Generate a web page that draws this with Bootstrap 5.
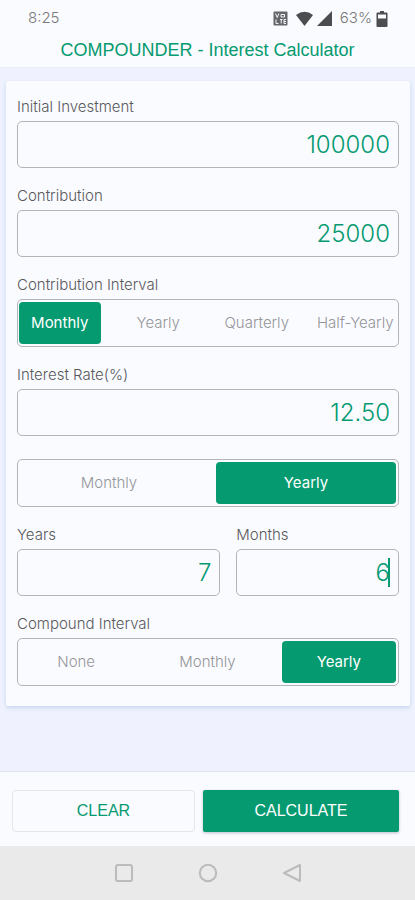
<!DOCTYPE html>
<html lang="en">
<head>
<meta charset="utf-8">
<meta name="viewport" content="width=device-width, initial-scale=1">
<title>COMPOUNDER - Interest Calculator</title>
<link href="https://cdn.jsdelivr.net/npm/bootstrap@5.3.0/dist/css/bootstrap.min.css" rel="stylesheet">
<style>
:root { --brand: #059a70; --paper: #fafbff; --edge: #b3b4b8; --grotesk: "Liberation Sans", Arial, sans-serif; }
body { background: #eff2fe; font-family: Inter, "Liberation Sans", sans-serif; font-weight: 300; }
.status-bar { height: 37px; padding: 0 27px 0 28px; color: #77787b; font-size: 15px; }
.app-head { background: var(--paper); height: 68px; border-bottom: 1px solid #ebeef7; }
.app-title { color: var(--brand); font-family: var(--grotesk); font-size: 18px; line-height: 26px; font-weight: 400; }
.calc-card { background: var(--paper); margin: 13px 5px 0 6px; padding: 14px 11px 20px; box-shadow: 0 2px 4px #c9d5ee; border-radius: 2px; }
.field-label { display: block; font-size: 15px; line-height: 24px; margin-bottom: 2px; color: #58595c; }
.amount, .amount:focus { height: 47px; border: 1px solid var(--edge); border-radius: 5px; background: transparent; color: var(--brand); text-align: right; font-size: 24px; font-weight: 300; padding: 0 8px; box-shadow: none; }
.stack { gap: 16px; }
.interval { height: 48px; gap: 17px; padding: 2px 2px 2px 1px; border: 1px solid var(--edge); border-radius: 5px; }
.interval .btn { flex: 1 1 0; padding: 0; border: 0; border-radius: 4px; font-size: 15px; font-weight: 300; color: #95969a; white-space: nowrap; display: flex; align-items: center; justify-content: center; }
.interval .btn-check:checked + .btn { background: var(--brand); color: #fff; font-weight: 400; }
.rate-period { margin-top: 7px; }
.years-col { flex: 5 1 0; min-width: 0; }
.months-col { flex: 4 1 0; min-width: 0; }
.text-caret { position: absolute; right: 9px; top: 9px; width: 2px; height: 29px; background: var(--brand); }
.action-bar { background: var(--paper); border-top: 1px solid #dfe2ec; padding: 18px 16px 14px 12px; gap: 8px; }
.action-bar .btn { height: 42px; padding: 0; font-family: var(--grotesk); font-size: 16px; }
.btn-clear { flex: 12 1 0; border: 1px solid #e4e6ec; border-radius: 4px; color: var(--brand); }
.btn-calc { flex: 13 1 0; background: var(--brand); color: #fff; border: 0; border-radius: 2px; box-shadow: 0 1px 3px #b9bfcc; }
.system-nav { background: #eaeaea; height: 54px; gap: 64px; }
.system-nav .btn { width: 20px; height: 20px; line-height: 0; }
</style>
</head>
<body class="d-flex flex-column min-vh-100">
<header class="app-head">
  <div class="status-bar d-flex align-items-center justify-content-between">
    <span>8:25</span>
    <span class="d-flex align-items-center">
      <svg class="me-2" width="15" height="15" viewBox="0 0 15 15" aria-hidden="true"><rect x=".5" y=".5" width="14" height="14" rx="1" fill="#66676a"/><path d="M2.500 2.500l1.700 4 1.700-4M3 8.500v4h2.500M8 3.500h3.500v2.500H8ZM7 8.500h2.500M8.200 8.500v4M13 8.500h-2v4h2M11 10.500h2" fill="none" stroke="#f4f5f8" stroke-width="1"/></svg>
      <svg class="me-1" width="17" height="15" viewBox="0 0 17 15" aria-hidden="true"><path d="M0 4Q8.500-2.500 17 4L8.500 15Z" fill="#4c4d4f"/></svg>
      <svg class="me-2" width="15" height="15" viewBox="0 0 15 15" aria-hidden="true"><path d="M15 0v15H0Z" fill="#4c4d4f"/></svg>
      <span>63%</span>
      <svg class="ms-1" width="12" height="16" viewBox="0 0 12 16" aria-hidden="true"><path d="M4 0h4v1.500h2.500q1 0 1 1v12.500q0 1-1 1h-9q-1 0-1-1V2.500q0-1 1-1H4Z" fill="#4c4d4f"/><path d="M2 3.500h8v4H2Z" fill="#fafbff"/></svg>
    </span>
  </div>
  <h1 class="app-title text-center m-0">COMPOUNDER - Interest Calculator</h1>
</header>

<main class="flex-grow-1">
  <form id="calc" class="calc-card d-flex flex-column stack">
    <div>
      <label class="field-label" for="initial">Initial Investment</label>
      <input class="form-control amount" id="initial" inputmode="decimal" value="100000">
    </div>
    <div>
      <label class="field-label" for="contribution">Contribution</label>
      <input class="form-control amount" id="contribution" inputmode="decimal" value="25000">
    </div>
    <div role="radiogroup" aria-labelledby="ci-label">
      <span class="field-label" id="ci-label">Contribution Interval</span>
      <div class="interval d-flex">
        <input class="btn-check" type="radio" name="ci" id="ci-m" checked><label class="btn" for="ci-m">Monthly</label>
        <input class="btn-check" type="radio" name="ci" id="ci-y"><label class="btn" for="ci-y">Yearly</label>
        <input class="btn-check" type="radio" name="ci" id="ci-q"><label class="btn" for="ci-q">Quarterly</label>
        <input class="btn-check" type="radio" name="ci" id="ci-h"><label class="btn" for="ci-h">Half-Yearly</label>
      </div>
    </div>
    <div>
      <label class="field-label" for="rate">Interest Rate(%)</label>
      <input class="form-control amount" id="rate" inputmode="decimal" value="12.50">
    </div>
    <div class="interval rate-period d-flex" role="radiogroup" aria-label="Interest rate period">
      <input class="btn-check" type="radio" name="rp" id="rp-m"><label class="btn" for="rp-m">Monthly</label>
      <input class="btn-check" type="radio" name="rp" id="rp-y" checked><label class="btn" for="rp-y">Yearly</label>
    </div>
    <div class="d-flex gap-3">
      <div class="years-col">
        <label class="field-label" for="years">Years</label>
        <input class="form-control amount" id="years" inputmode="numeric" value="7">
      </div>
      <div class="months-col">
        <label class="field-label" for="months">Months</label>
        <div class="position-relative">
          <input class="form-control amount" id="months" inputmode="numeric" value="6">
          <span class="text-caret" aria-hidden="true"></span>
        </div>
      </div>
    </div>
    <div role="radiogroup" aria-labelledby="cp-label">
      <span class="field-label" id="cp-label">Compound Interval</span>
      <div class="interval d-flex">
        <input class="btn-check" type="radio" name="cp" id="cp-n"><label class="btn" for="cp-n">None</label>
        <input class="btn-check" type="radio" name="cp" id="cp-m"><label class="btn" for="cp-m">Monthly</label>
        <input class="btn-check" type="radio" name="cp" id="cp-y" checked><label class="btn" for="cp-y">Yearly</label>
      </div>
    </div>
  </form>
</main>

<footer>
  <div class="action-bar d-flex">
    <button class="btn btn-clear" type="reset" form="calc">CLEAR</button>
    <button class="btn btn-calc" type="submit" form="calc">CALCULATE</button>
  </div>
  <nav class="system-nav d-flex align-items-center justify-content-center" aria-label="System">
    <button class="btn border-0 p-0" type="button" aria-label="Recent apps"><svg width="20" height="20" viewBox="0 0 20 20" fill="none" stroke="#bbb" stroke-width="2"><rect x="2" y="2" width="16" height="16" rx="2"/></svg></button>
    <button class="btn border-0 p-0" type="button" aria-label="Home"><svg width="20" height="20" viewBox="0 0 20 20" fill="none" stroke="#bbb" stroke-width="2"><circle cx="10" cy="10" r="8.200"/></svg></button>
    <button class="btn border-0 p-0" type="button" aria-label="Back"><svg width="20" height="20" viewBox="0 0 20 20" fill="none" stroke="#bbb" stroke-width="2" stroke-linejoin="round"><path d="M18 2v16L2 10Z"/></svg></button>
  </nav>
</footer>
<script src="https://cdn.jsdelivr.net/npm/bootstrap@5.3.0/dist/js/bootstrap.bundle.min.js"></script>
</body>
</html>
